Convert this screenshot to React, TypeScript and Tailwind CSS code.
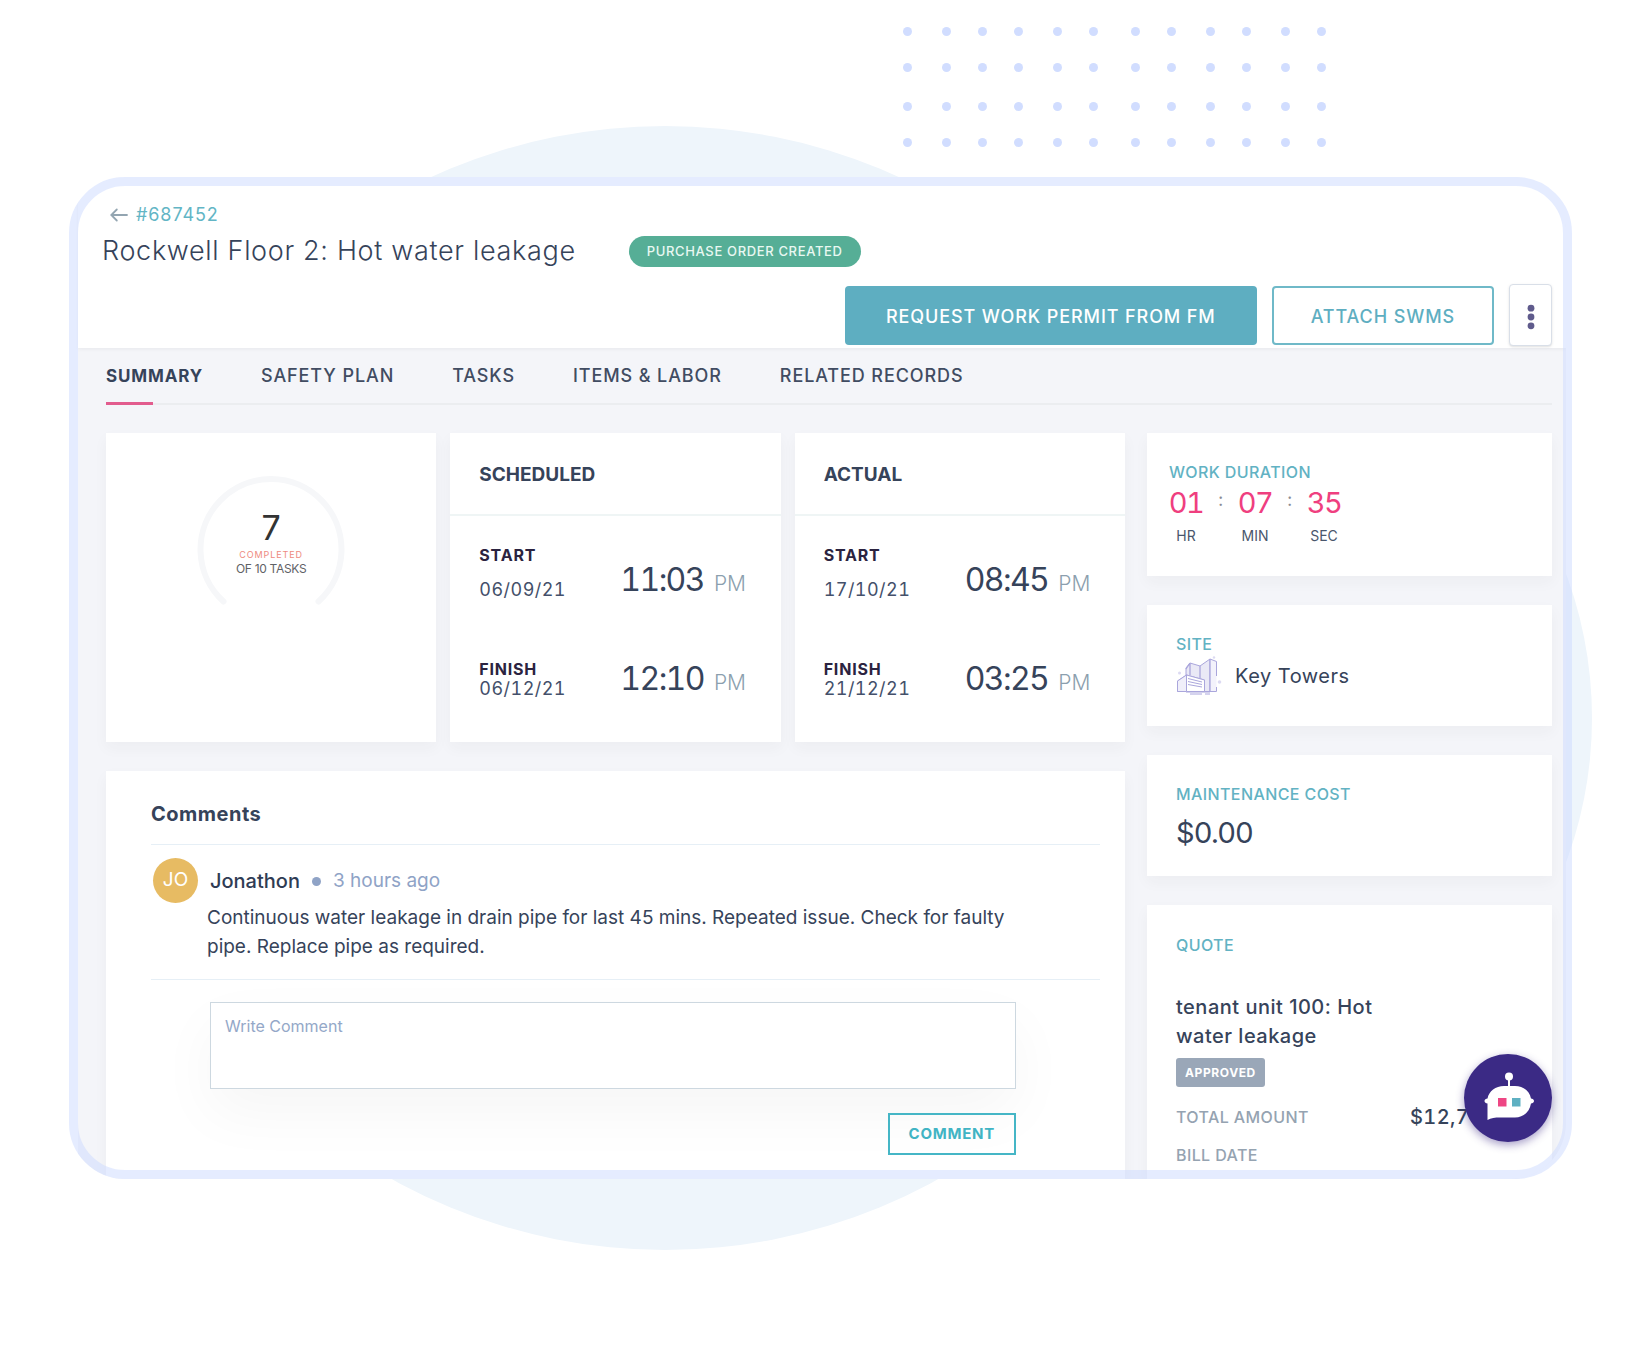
import type { ReactNode } from "react";

const dotColumns = [907, 946, 982, 1018, 1057, 1093, 1135, 1171, 1210, 1246, 1285, 1321];
const dotRows = [31, 67, 106, 142];

function Backdrop() {
  return (
    <svg
      aria-hidden="true"
      className="pointer-events-none absolute top-0 left-0"
      width="1647"
      height="1356"
      viewBox="0 0 1647 1356"
    >
      <circle cx="665" cy="688" r="562" fill="#eef5fb" />
      <circle cx="1178" cy="718" r="414" fill="#eef5fb" />
      {dotRows.map((y) =>
        dotColumns.map((x) => <circle key={`${x}-${y}`} cx={x + 0.5} cy={y + 0.5} r="4.5" fill="#d1ddff" />),
      )}
    </svg>
  );
}

function Card({ className = "", children }: { className?: string; children: ReactNode }) {
  return <section className={`bg-white shadow-[0_6px_14px_rgba(60,60,60,0.04)] ${className}`}>{children}</section>;
}

function CardLabel({ children }: { children: ReactNode }) {
  return <h2 className="text-base leading-5 font-medium tracking-wide text-[#62b2c3]">{children}</h2>;
}

function Header() {
  return (
    <header className="relative bg-white pt-[26px] pr-[14px] pb-[2px] pl-6 shadow-[0_1px_4px_rgba(0,0,0,0.06)]">
      <a href="#back" className="flex items-center gap-2 pl-2 text-lg leading-6 tracking-wider text-[#62b5c5]">
        <svg width="18" height="14" viewBox="0 0 18 14" fill="none" stroke="#93a5b1" strokeWidth="1.8" strokeLinecap="round">
          <path d="M17 7H1.5M6.8 1.5 1.3 7l5.5 5.5" />
        </svg>
        #687452
      </a>
      <div className="mt-[6px] flex items-center gap-[53px]">
        <h1 className="text-[27px] leading-9 font-light tracking-wide text-[#36435a]">
          Rockwell Floor 2: Hot water leakage
        </h1>
        <span className="rounded-full bg-[#56ae96] px-[18px] text-[13px] leading-[31px] font-medium tracking-wider text-[#e9f8f2]">
          PURCHASE ORDER CREATED
        </span>
      </div>
      <div className="mt-[15px] flex items-center justify-end gap-[15px]">
        <button className="h-[59px] rounded-[4px] bg-[#5eaec1] px-[41px] pt-1 text-lg font-medium tracking-wider text-white">
          REQUEST WORK PERMIT FROM FM
        </button>
        <button className="h-[59px] rounded-[4px] border-2 border-[#6fb9c8] px-[37px] pt-1 text-lg font-medium tracking-wider text-[#5eaec1]">
          ATTACH SWMS
        </button>
        <button
          aria-label="More actions"
          className="flex h-[62px] w-[43px] items-center justify-center rounded-[4px] border border-[#d9dfe8] bg-white pt-1 shadow-sm"
        >
          <svg width="8" height="26" viewBox="0 0 8 26" fill="#5f5b8c">
            <circle cx="4" cy="4.2" r="3.4" />
            <circle cx="4" cy="13" r="3.4" />
            <circle cx="4" cy="21.8" r="3.4" />
          </svg>
        </button>
      </div>
    </header>
  );
}

const tabs = ["SUMMARY", "SAFETY PLAN", "TASKS", "ITEMS & LABOR", "RELATED RECORDS"];

function Tabs() {
  return (
    <nav className="flex gap-[58px] border-b-2 border-[#ebedf0] pt-4">
      {tabs.map((tab, i) => (
        <a
          key={tab}
          href="#tab"
          className={
            i === 0
              ? "relative pb-[15px] text-[17px] leading-6 font-bold tracking-wider text-[#36435a] after:absolute after:-bottom-[2px] after:left-0 after:h-[3px] after:w-[47px] after:bg-[#e25c8e]"
              : "pb-[15px] text-lg leading-6 font-medium tracking-wider text-[#414c62]"
          }
        >
          {tab}
        </a>
      ))}
    </nav>
  );
}

function TaskProgress() {
  return (
    <Card className="relative flex justify-center pt-[42px]">
      <svg className="absolute" width="148" height="148" viewBox="0 0 148 148" fill="none">
        <path d="M26.5 126.5A70.5 70.5 0 1 1 121.5 126.5" stroke="#f6f7f9" strokeWidth="6" strokeLinecap="round" />
      </svg>
      <div className="relative flex flex-col items-center pt-8">
        <span className="text-[34px] leading-[42px] text-[#333333]">7</span>
        <span className="text-[9px] leading-3 tracking-widest text-[#ee8a80]">COMPLETED</span>
        <span className="text-xs leading-4 tracking-tight text-[#5f6266]">OF 10 TASKS</span>
      </div>
    </Card>
  );
}

function TimeCard({ title, start, finish }: { title: string; start: string[]; finish: string[] }) {
  return (
    <Card>
      <h2 className="flex h-[83px] items-center border-b-2 border-[#eff5f5] pt-[3px] pl-[29px] text-[19px] font-bold text-[#36435a]">
        {title}
      </h2>
      <div className="flex flex-col gap-[59px] pt-[29px] pb-[43px] pl-[29px]">
        {[
          { label: "START", gap: "gap-[15px]", v: start },
          { label: "FINISH", gap: "gap-0", v: finish },
        ].map(({ label, gap, v }) => (
          <div key={label} className="flex items-end tabular-nums">
            <div className={`flex w-[141px] flex-col ${gap}`}>
              <span className="text-base leading-5 font-bold tracking-wider text-[#2b2340]">{label}</span>
              <span className="text-lg leading-5 tracking-wide text-[#44506a]">{v[0]}</span>
            </div>
            <div className="flex items-baseline gap-[10px] text-[#36435a]">
              <span className="text-[32px] leading-10 tracking-tighter">{v[1]}</span>
              <span className="text-[21px] leading-6 font-light text-[#8c9fae]">PM</span>
            </div>
          </div>
        ))}
      </div>
    </Card>
  );
}

function Comments() {
  return (
    <Card className="pt-[30px] pr-[25px] pb-6 pl-[45px]">
      <h2 className="pb-4 text-xl leading-[27px] font-bold tracking-wide text-[#36435a]">Comments</h2>
      <article className="flex gap-[9px] border-y border-[#e6eff6] pt-[13px] pb-[18px] pl-[2px]">
        <span className="flex size-[45px] shrink-0 items-center justify-center rounded-full bg-[#e7bb63] text-[19px] text-white">
          JO
        </span>
        <div className="pt-[9px]">
          <p className="flex items-center pl-[3px] text-[19px] leading-7">
            <span className="text-xl leading-7 font-medium text-[#2f3c54]">Jonathon</span>
            <span className="mr-[12px] ml-[12px] size-[9px] rounded-full bg-[#8fa3c6]" />
            <span className="text-[#8fa3c6]">3 hours ago</span>
          </p>
          <p className="mt-2 max-w-[820px] text-[19px] leading-[29px] text-[#36435a]">
            Continuous water leakage in drain pipe for last 45 mins. Repeated issue. Check for faulty pipe. Replace pipe
            as required.
          </p>
        </div>
      </article>
      <form className="mt-[22px] mr-[84px] ml-[59px] flex flex-col items-end gap-6" onSubmit={(e) => e.preventDefault()}>
        <textarea
          aria-label="Write Comment"
          placeholder="Write Comment"
          className="block h-[87px] w-full resize-none border border-[#cdd8e0] bg-white px-[14px] py-[11px] text-base leading-6 shadow-[0_24px_60px_rgba(0,0,0,0.04)] placeholder:text-[#94a8c8]"
        />
        <button className="relative h-[42px] border-2 border-[#45b6c6] px-[19px] text-[15px] font-bold tracking-wider text-[#41b4c4]">
          COMMENT
        </button>
      </form>
    </Card>
  );
}

function WorkDuration() {
  const parts = [
    ["01", "HR"],
    ["07", "MIN"],
    ["35", "SEC"],
  ];
  return (
    <Card className="px-[22px] pt-[29px] pb-7">
      <CardLabel>WORK DURATION</CardLabel>
      <div className="mt-[1px] flex gap-[35px] tabular-nums">
        {parts.map(([value, unit], i) => (
          <div key={unit} className="relative flex w-[34px] flex-col items-center">
            <span className="text-[29px] leading-10 tracking-tighter text-[#ef3f7f]">{value}</span>
            <span className="mt-[1px] text-sm leading-6 text-[#4a566c]">{unit}</span>
            {i < 2 && <span className="absolute top-[3px] -right-5 text-lg text-[#8b8b93]">:</span>}
          </div>
        ))}
      </div>
    </Card>
  );
}

function TowersIcon() {
  return (
    <svg width="46" height="40" viewBox="0 0 46 40" fill="none" stroke="#aaa6dc" strokeWidth="1" strokeLinejoin="round">
      <path d="M10 36V12l4-5 10 3 10-7v33Z" fill="#eae9f6" />
      <path d="M34 3l6.500 2.500V35H34Z" fill="#f3f2fb" stroke="none" />
      <path d="M34 3l6.500 2.500V20M40.500 31v4.500H1.500V25l9-6 18 5v11.500" fill="none" />
      <path d="M1.500 25l9-6v16.500h-9Z" fill="#f0effa" />
      <path d="M10.500 19l18 5v11.500h-18Z" fill="#ffffff" />
      <path d="M14 7v12M24 10v12.500M34 3v32M10 13l4-6" strokeWidth="1.300" />
      <path d="M12 22.500l14 3.500M12 25.500l14 3M12 28.500l14 2.500" />
      <path d="M14 38h12M29 38h5" />
      <g fill="#dcdaf2" stroke="none">
        <circle cx="3.500" cy="17" r="1.500" />
        <circle cx="43.500" cy="26" r="1.800" />
        <circle cx="38" cy="1.500" r="1.200" />
      </g>
    </svg>
  );
}

function Quote() {
  return (
    <Card className="px-[29px] pt-[30px]">
      <CardLabel>QUOTE</CardLabel>
      <h3 className="mt-[38px] w-[215px] text-xl leading-[29px] font-medium tracking-wide text-[#36435a]">
        tenant unit 100: Hot water leakage
      </h3>
      <span className="mt-[7px] inline-block rounded-[3px] bg-[#9aa7b8] px-[9px] text-xs leading-[29px] font-bold tracking-wider text-white">
        APPROVED
      </span>
      <dl className="mt-[18px] text-base leading-6 font-medium tracking-wide text-[#95a3b1]">
        <div className="flex items-center">
          <dt className="w-[234px]">TOTAL AMOUNT</dt>
          <dd className="text-xl leading-6 text-[#36435a] tabular-nums">$12,700</dd>
        </div>
        <div className="mt-[14px]">
          <dt>BILL DATE</dt>
        </div>
      </dl>
    </Card>
  );
}

function AssistantButton() {
  return (
    <button
      aria-label="Open assistant"
      className="absolute right-5 bottom-[37px] size-22 rounded-full bg-[#3b2a85] shadow-[0_3px_8px_rgba(59,42,133,0.45)]"
    >
      <svg width="88" height="88" viewBox="0 0 88 88">
        <circle cx="45" cy="22.500" r="4" fill="#fff" />
        <path d="M45 24v10" stroke="#fff" strokeWidth="2" />
        <path
          d="M40 32h11c8.500 0 14.500 5 16 12.500 1.500 0 3 1 3 2.500s-1.500 2.500-3 2.500C65.500 58 59.500 63.500 51 63.500H36c-5 0-9 .5-12.500 2.500V49.500c-1.500 0-3-1-3-2.500s1.500-2.500 3-2.500C25 37 31.500 32 40 32Z"
          fill="#fff"
        />
        <path d="M34 44h8.500v8.500H34Z" fill="#ee4684" />
        <path d="M48 44h8.500v8.500H48Z" fill="#5eb0c2" />
      </svg>
    </button>
  );
}

export default function App() {
  return (
    <div className="relative min-h-screen overflow-hidden bg-white pt-[177px] pr-[75px] pb-[160px] pl-[69px] font-['Inter',sans-serif]">
      <Backdrop />
      <main className="relative">
        <div className="mr-[6px] overflow-hidden rounded-[56px] bg-white pl-[9px]">
          <Header />
          <div className="bg-[#f4f5f9] pr-[14px] pl-7">
            <Tabs />
            <div className="grid grid-cols-[minmax(0,1fr)_405px] gap-[22px] pt-7">
              <div className="flex flex-col gap-[29px]">
                <div className="grid grid-cols-3 gap-[14px]">
                  <TaskProgress />
                  <TimeCard title="SCHEDULED" start={["06/09/21", "11:03"]} finish={["06/12/21", "12:10"]} />
                  <TimeCard title="ACTUAL" start={["17/10/21", "08:45"]} finish={["21/12/21", "03:25"]} />
                </div>
                <Comments />
              </div>
              <div className="grid grid-rows-[auto_auto_auto_1fr] gap-[29px]">
                <WorkDuration />
                <Card className="px-[29px] pt-[29px] pb-[30px]">
                  <CardLabel>SITE</CardLabel>
                  <p className="mt-[2px] flex items-center gap-[13px] text-xl tracking-wide text-[#36435a]">
                    <TowersIcon />
                    Key Towers
                  </p>
                </Card>
                <Card className="px-[29px] pt-[29px] pb-[23px]">
                  <CardLabel>MAINTENANCE COST</CardLabel>
                  <p className="mt-[9px] text-[29px] leading-10 tracking-tight text-[#36435a]">$0.00</p>
                </Card>
                <Quote />
              </div>
            </div>
          </div>
        </div>
        <div className="pointer-events-none absolute inset-0 rounded-[56px] border-9 border-[#cbd9ff]/50" />
        <AssistantButton />
      </main>
    </div>
  );
}
